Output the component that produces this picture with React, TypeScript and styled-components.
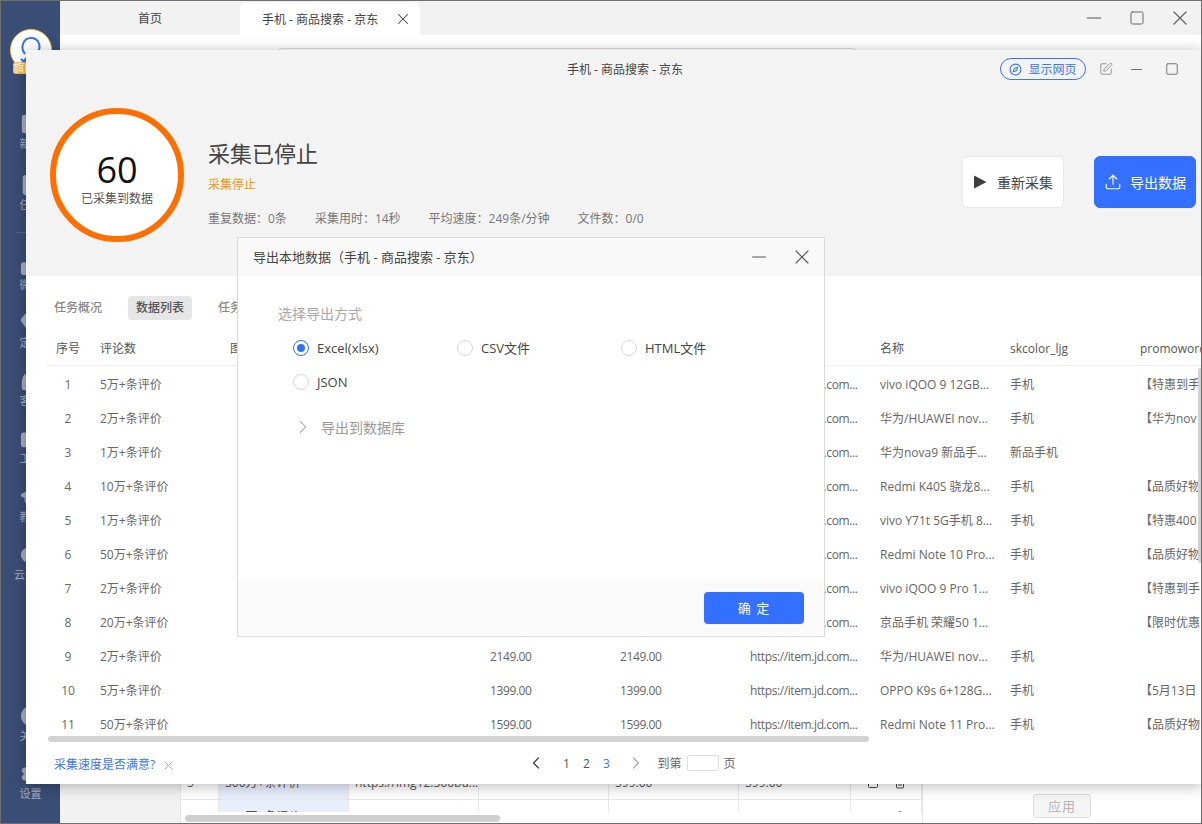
import React from "react";
import styled, { createGlobalStyle } from "styled-components";
import {
  Briefcase,
  ChevronLeft,
  ChevronRight,
  Cloud,
  Compass,
  FileText,
  Gem,
  GraduationCap,
  Headphones,
  Info,
  Minus,
  Settings,
  Square,
  SquarePen,
  SquarePlus,
  ThumbsUp,
  Trash2,
  SquareArrowOutUpRight,
  Upload,
  X,
} from "lucide-react";

const GlobalStyle = createGlobalStyle`
  html, body { margin: 0; padding: 0; background: #fff; }
  body { font-family: "Open Sans", "Noto Sans CJK SC", sans-serif; font-size: 12px; color: #555; overflow: hidden; }
  * { box-sizing: border-box; }
`;

const Frame = styled.div`
  position: relative;
  width: 1202px;
  height: 824px;
  display: flex;
  border: 1px solid #6e6e6e;
  overflow: hidden;
`;

const Sidebar = styled.nav`
  width: 59px;
  flex: none;
  background: #3a4d74;
  display: flex;
  flex-direction: column;
  align-items: center;
  padding-top: 28px;
`;

const LogoWrap = styled.div`
  position: relative;
  width: 42px;
  height: 46px;
  margin-bottom: 38px;
`;

const LogoCircle = styled.div`
  width: 42px;
  height: 42px;
  border-radius: 50%;
  background: #fff;
  border: 1px solid #f0c050;
  display: flex;
  align-items: center;
  justify-content: center;
`;

const LogoBadge = styled.span`
  position: absolute;
  left: 3px;
  top: 33px;
  width: 36px;
  height: 12px;
  border-radius: 3px;
  background: #f6bb3c;
  color: #fff;
  font-size: 11px;
  line-height: 12px;
  padding-left: 1px;
  white-space: nowrap;
  overflow: hidden;
`;

const NavList = styled.div<{ $gap: number }>`
  display: flex;
  flex-direction: column;
  align-items: center;
  gap: ${(p) => p.$gap}px;
`;

const NavItem = styled.div`
  display: flex;
  flex-direction: column;
  align-items: center;
  gap: 1px;
  color: #a4adc1;
  font-size: 11px;
  line-height: 15px;
  width: 59px;
  white-space: nowrap;
`;

const NavDivider = styled.div`
  width: 28px;
  height: 1px;
  background: #56678a;
  margin: 20px 0 21px;
`;

const NavBottom = styled(NavList)`
  margin-top: auto;
  padding-bottom: 22px;
`;

const Main = styled.div`
  flex: 1;
  min-width: 0;
  display: flex;
  flex-direction: column;
  background: #fff;
`;

const TabBar = styled.div`
  height: 34px;
  flex: none;
  background: #f2f2f2;
  display: flex;
  align-items: stretch;
`;

const Tab = styled.div<{ $active?: boolean }>`
  width: 180px;
  display: flex;
  align-items: center;
  justify-content: ${(p) => (p.$active ? "space-between" : "center")};
  padding: ${(p) => (p.$active ? "0 8px 0 22px" : "0")};
  margin-top: ${(p) => (p.$active ? "1px" : "0")};
  background: ${(p) => (p.$active ? "#fff" : "#f2f2f2")};
  border-radius: ${(p) => (p.$active ? "6px 6px 0 0" : "0 0 6px 0")};
  color: #444;
  font-size: 12px;
`;

const WindowControls = styled.div`
  margin-left: auto;
  display: grid;
  grid-template-columns: 43px 43px 43px;
  justify-items: center;
  align-items: center;
  color: #666;
`;

const SearchRow = styled.div`
  flex: none;
  height: 48px;
  padding: 13px 341px 0 215px;
`;

const SearchBox = styled.div`
  height: 35px;
  border: 1px solid #dcdcdc;
  border-radius: 8px;
`;

const Content = styled.div`
  flex: 1;
  min-height: 0;
  display: flex;
`;

const LeftPanel = styled.div`
  width: 121px;
  flex: none;
  background: #f2f2f2;
  border-right: 1px solid #e5e5e5;
`;

const BackTable = styled.div`
  width: 741px;
  flex: none;
  display: flex;
  flex-direction: column;
  min-height: 0;
`;

const BackRows = styled.div`
  flex: 1;
  min-height: 0;
  overflow: hidden;
  padding-top: 683px;
`;

const BackRow = styled.div`
  display: grid;
  grid-template-columns: 38px 130px 130px 130px 130px 112px 71px;
  height: 34px;
  border-bottom: 1px solid #e8e8e8;
`;

const BackCell = styled.div<{ $hl?: boolean }>`
  border-right: 1px solid #e8e8e8;
  background: ${(p) => (p.$hl ? "#e8eefc" : "#fff")};
  padding: 1px 6px 0;
  line-height: 31px;
  white-space: nowrap;
  overflow: hidden;
  color: #555;
`;

const BackActions = styled(BackCell)`
  display: flex;
  align-items: center;
  justify-content: center;
  gap: 15px;
  color: #444;
`;

const BackScrollTrack = styled.div`
  flex: none;
  height: 11px;
  padding: 3px 0 1px 4px;
  background: #fff;
`;

const BackScrollThumb = styled.div`
  width: 315px;
  height: 7px;
  border-radius: 4px;
  background: #cfcfcf;
`;

const RightPanel = styled.div`
  flex: 1;
  border-left: 1px solid #e5e5e5;
  display: flex;
  flex-direction: column;
  justify-content: flex-end;
  align-items: center;
  padding: 0 0 5px 0;
`;

const ApplyButton = styled.div`
  width: 58px;
  height: 24px;
  border: 1px solid #ddd;
  border-radius: 3px;
  background: #f5f5f5;
  color: #b5b5b5;
  font-size: 13px;
  line-height: 22px;
  text-align: center;
  letter-spacing: 1px;
`;

const TaskWindow = styled.section`
  position: absolute;
  left: 25px;
  top: 49px;
  right: -1px;
  height: 734px;
  background: #fff;
  box-shadow: 0 2px 14px rgba(0, 0, 0, 0.28);
  display: flex;
  flex-direction: column;
`;

const WindowHead = styled.header`
  height: 226px;
  flex: none;
  background: #f3f3f3;
  display: flex;
  flex-direction: column;
`;

const TitleRow = styled.div`
  height: 38px;
  flex: none;
  display: flex;
  align-items: center;
  padding: 0 12px 0 224px;
`;

const WindowTitle = styled.div`
  flex: 1;
  text-align: center;
  font-size: 12px;
  color: #444;
`;

const ShowPageButton = styled.div`
  width: 86px;
  height: 22px;
  border: 1px solid #3a76f6;
  border-radius: 11px;
  color: #3a76f6;
  display: flex;
  align-items: center;
  justify-content: center;
  gap: 6px;
  font-size: 12px;
  margin-right: 8px;
`;

const HeadIcons = styled.div`
  display: grid;
  grid-template-columns: 24px 36px 36px;
  justify-items: center;
  align-items: center;
  color: #8a8a8a;
`;

const Summary = styled.div`
  display: flex;
  align-items: flex-start;
  padding: 20px 6px 0 24px;
`;

const Ring = styled.div`
  width: 134px;
  height: 134px;
  flex: none;
  border-radius: 50%;
  border: 6px solid #ff6f00;
  background: #fff;
  display: flex;
  flex-direction: column;
  align-items: center;
  padding-top: 36px;
`;

const RingValue = styled.div`
  font-size: 36px;
  line-height: 40px;
  color: #111;
`;

const RingLabel = styled.div`
  font-size: 12px;
  line-height: 18px;
  color: #555;
`;

const SummaryText = styled.div`
  flex: 1;
  padding: 28px 0 0 24px;
`;

const StatusTitle = styled.h1`
  margin: 0;
  font-size: 22px;
  line-height: 34px;
  font-weight: 400;
  color: #444;
`;

const StatusNote = styled.div`
  color: #ff9500;
  font-size: 12px;
  line-height: 16px;
  margin-top: 7px;
`;

const Stats = styled.div`
  display: flex;
  gap: 28px;
  margin-top: 18px;
  color: #777;
  font-size: 12px;
  line-height: 16px;
`;

const ActionButton = styled.div<{ $primary?: boolean }>`
  width: 102px;
  height: 52px;
  margin: 48px 0 0 30px;
  border-radius: 6px;
  border: 1px solid ${(p) => (p.$primary ? "#3370ff" : "#e8e8e8")};
  background: ${(p) => (p.$primary ? "#3370ff" : "#fff")};
  color: ${(p) => (p.$primary ? "#fff" : "#444")};
  font-size: 14px;
  display: flex;
  align-items: center;
  justify-content: center;
  gap: ${(p) => (p.$primary ? "8px" : "10px")};
`;

const Tabs = styled.div`
  height: 55px;
  flex: none;
  display: flex;
  align-items: center;
  gap: 26px;
  padding: 9px 0 0 28px;
`;

const TabPill = styled.div<{ $active?: boolean }>`
  padding: 0 ${(p) => (p.$active ? "8px" : "0")};
  height: 24px;
  line-height: 24px;
  border-radius: 4px;
  background: ${(p) => (p.$active ? "#e6e6e6" : "transparent")};
  font-size: 12px;
  font-weight: 500;
  color: ${(p) => (p.$active ? "#555" : "#888")};
`;

const TableClip = styled.div`
  position: relative;
  height: 401px;
  flex: none;
  margin-left: 20px;
  overflow: hidden;
`;

const Row = styled.div<{ $head?: boolean }>`
  display: grid;
  grid-template-columns: 44px repeat(9, 130px);
  height: ${(p) => (p.$head ? "35px" : "34px")};
  padding-top: ${(p) => (p.$head ? "0" : "2px")};
  align-items: center;
  border-bottom: ${(p) => (p.$head ? "1px solid #eee" : "none")};
  color: ${(p) => (p.$head ? "#555" : "#666")};
`;

const Cell = styled.div<{ $center?: boolean; $tight?: boolean }>`
  padding: 0 10px;
  white-space: nowrap;
  overflow: hidden;
  text-align: ${(p) => (p.$center ? "center" : "left")};
  font-size: 12px;
  letter-spacing: ${(p) => (p.$tight ? "-0.4px" : "0")};
`;

const VScroll = styled.div`
  position: absolute;
  right: 0;
  top: 37px;
  width: 4px;
  height: 195px;
  border-radius: 2px;
  background: #d2d2d2;
`;

const HScroll = styled.div`
  flex: none;
  height: 6px;
  width: 821px;
  margin: 4px 0 0 22px;
  border-radius: 3px;
  background: #d2d2d2;
`;

const WindowFoot = styled.footer`
  position: relative;
  flex: 1;
  display: flex;
  align-items: center;
  justify-content: center;
`;

const Feedback = styled.div`
  position: absolute;
  left: 28px;
  top: 14px;
  display: flex;
  align-items: center;
  gap: 6px;
  color: #3a76f6;
  font-size: 12px;
  line-height: 18px;
`;

const Pager = styled.div`
  display: flex;
  align-items: center;
  margin-left: 34px;
  color: #666;
  font-size: 12px;
`;

const PageNum = styled.span<{ $active?: boolean }>`
  width: 20px;
  text-align: center;
  color: ${(p) => (p.$active ? "#3370ff" : "#555")};
`;

const PageInput = styled.div`
  width: 32px;
  height: 16px;
  border: 1px solid #ddd;
  border-radius: 2px;
  margin: 0 5px;
`;

const PagerArrow = styled.span<{ $muted?: boolean; $gap: string }>`
  display: flex;
  color: ${(p) => (p.$muted ? "#aaa" : "#444")};
  margin: ${(p) => p.$gap};
`;

const Dialog = styled.div`
  position: absolute;
  left: 211px;
  top: 187px;
  width: 588px;
  height: 400px;
  background: #fff;
  border: 1px solid #dadada;
  display: flex;
  flex-direction: column;
`;

const DialogHead = styled.div`
  height: 38px;
  flex: none;
  background: #f9f9f9;
  display: flex;
  align-items: center;
  justify-content: space-between;
  padding: 0 10px 1px 15px;
  font-size: 13px;
  color: #444;
`;

const DialogTools = styled.div`
  display: flex;
  align-items: center;
  gap: 20px;
  color: #555;
`;

const DialogBody = styled.div`
  flex: 1;
  padding: 28px 0 0 40px;
`;

const SectionLabel = styled.div`
  font-size: 14px;
  line-height: 20px;
  color: #a8a8a8;
`;

const RadioGrid = styled.div`
  display: grid;
  grid-template-columns: repeat(3, 164px);
  row-gap: 14px;
  margin: 14px 0 0 15px;
`;

const RadioItem = styled.label`
  display: flex;
  align-items: center;
  gap: 8px;
  height: 20px;
  font-size: 13px;
  line-height: 18px;
  color: #444;
`;

const RadioDot = styled.span<{ $on?: boolean }>`
  width: 16px;
  height: 16px;
  flex: none;
  border-radius: 50%;
  border: 1px solid ${(p) => (p.$on ? "#3370ff" : "#d8d8d8")};
  background: #fff;
  display: flex;
  align-items: center;
  justify-content: center;
  &::after {
    content: "";
    width: 8px;
    height: 8px;
    border-radius: 50%;
    background: ${(p) => (p.$on ? "#3370ff" : "transparent")};
  }
`;

const Collapse = styled.div`
  display: flex;
  align-items: center;
  gap: 7px;
  margin: 24px 0 0 14px;
  font-size: 14px;
  color: #999;
`;

const DialogFoot = styled.div`
  height: 56px;
  flex: none;
  background: #fafafa;
  display: flex;
  align-items: flex-start;
  justify-content: flex-end;
  padding: 12px 20px 0 0;
`;

const ConfirmButton = styled.div`
  width: 100px;
  height: 32px;
  border-radius: 4px;
  background: #3370ff;
  color: #fff;
  font-size: 13px;
  line-height: 32px;
  text-align: center;
  letter-spacing: 1px;
`;

const Logo = () => (
  <svg width="30" height="30" viewBox="0 0 30 30" fill="none" stroke="#3370ff" strokeWidth="2">
    <path d="M9 19 C4 13 7 3 15 3 C23 3 26 12 21 18 C18 21 13 20 12 21 L8 26 M5 24 L8 27 L13 24" />
  </svg>
);

const PlayIcon = () => (
  <svg width="14" height="14" viewBox="0 0 14 14">
    <path d="M1 0.5 L13.5 7 L1 13.5 Z" fill="#3d3d3d" />
  </svg>
);

const navTop = [
  { icon: SquarePlus, label: "新建" },
  { icon: FileText, label: "任务" },
];
const navMid = [
  { icon: ThumbsUp, label: "微信" },
  { icon: Gem, label: "定制" },
  { icon: Headphones, label: "客服" },
  { icon: Briefcase, label: "工具" },
  { icon: GraduationCap, label: "教程" },
  { icon: Cloud, label: "云采集" },
];
const navBottom = [
  { icon: Info, label: "关于" },
  { icon: Settings, label: "设置" },
];

const ITEM_URL = "https://item.jd.com...";
const rows = [
  ["1", "5万+条评价", "2999.00", "2999.00", "vivo iQOO 9 12GB...", "手机", "【特惠到手"],
  ["2", "2万+条评价", "2699.00", "2699.00", "华为/HUAWEI nov...", "手机", "【华为nov"],
  ["3", "1万+条评价", "2699.00", "2699.00", "华为nova9 新品手...", "新品手机", ""],
  ["4", "10万+条评价", "1999.00", "1999.00", "Redmi K40S 骁龙8...", "手机", "【品质好物"],
  ["5", "1万+条评价", "1099.00", "1099.00", "vivo Y71t 5G手机 8...", "手机", "【特惠400"],
  ["6", "50万+条评价", "1099.00", "1099.00", "Redmi Note 10 Pro...", "手机", "【品质好物"],
  ["7", "2万+条评价", "3999.00", "3999.00", "vivo iQOO 9 Pro 1...", "手机", "【特惠到手"],
  ["8", "20万+条评价", "1999.00", "1999.00", "京品手机 荣耀50 1...", "", "【限时优惠"],
  ["9", "2万+条评价", "2149.00", "2149.00", "华为/HUAWEI nov...", "手机", ""],
  ["10", "5万+条评价", "1399.00", "1399.00", "OPPO K9s 6+128G...", "手机", "【5月13日"],
  ["11", "50万+条评价", "1599.00", "1599.00", "Redmi Note 11 Pro...", "手机", "【品质好物"],
];

const radios = [
  { label: "Excel(xlsx)", on: true },
  { label: "CSV文件" },
  { label: "HTML文件" },
  { label: "JSON" },
];

const renderNav = (items: typeof navTop) =>
  items.map(({ icon: Icon, label }) => (
    <NavItem key={label}>
      <Icon size={22} fill="#a4adc1" />
      {label}
    </NavItem>
  ));

export default function App() {
  return (
    <>
      <GlobalStyle />
      <Frame>
        <Sidebar>
          <LogoWrap>
            <LogoCircle>
              <Logo />
            </LogoCircle>
            <LogoBadge>旗舰版</LogoBadge>
          </LogoWrap>
          <NavList $gap={23}>{renderNav(navTop)}</NavList>
          <NavDivider />
          <NavList $gap={20}>{renderNav(navMid)}</NavList>
          <NavBottom $gap={20}>{renderNav(navBottom)}</NavBottom>
        </Sidebar>
        <Main>
          <TabBar>
            <Tab>首页</Tab>
            <Tab $active>
              手机 - 商品搜索 - 京东
              <X size={18} strokeWidth={1.4} />
            </Tab>
            <WindowControls>
              <Minus size={22} strokeWidth={1.8} color="#888" />
              <Square size={16} strokeWidth={1.5} />
              <X size={24} strokeWidth={1.3} />
            </WindowControls>
          </TabBar>
          <SearchRow>
            <SearchBox />
          </SearchRow>
          <Content>
            <LeftPanel />
            <BackTable>
              <BackRows>
                {["5", ""].map((n, i) => (
                  <BackRow key={i}>
                    <BackCell>{n}</BackCell>
                    <BackCell $hl>{i === 0 ? "300万+条评价" : "200万+条评价"}</BackCell>
                    <BackCell>{i === 0 ? "https://img12.360bu..." : ""}</BackCell>
                    <BackCell />
                    <BackCell>{i === 0 ? "599.00" : ""}</BackCell>
                    <BackCell>{i === 0 ? "599.00" : ""}</BackCell>
                    <BackActions>
                      <SquareArrowOutUpRight size={12} />
                      <Trash2 size={12} />
                    </BackActions>
                  </BackRow>
                ))}
              </BackRows>
              <BackScrollTrack>
                <BackScrollThumb />
              </BackScrollTrack>
            </BackTable>
            <RightPanel>
              <ApplyButton>应用</ApplyButton>
            </RightPanel>
          </Content>
        </Main>

        <TaskWindow>
          <WindowHead>
            <TitleRow>
              <WindowTitle>手机 - 商品搜索 - 京东</WindowTitle>
              <ShowPageButton>
                <Compass size={13} />
                显示网页
              </ShowPageButton>
              <HeadIcons>
                <SquarePen size={14} strokeWidth={1.5} />
                <Minus size={17} strokeWidth={1.3} color="#666" />
                <Square size={14} strokeWidth={1.5} color="#666" />
              </HeadIcons>
            </TitleRow>
            <Summary>
              <Ring>
                <RingValue>60</RingValue>
                <RingLabel>已采集到数据</RingLabel>
              </Ring>
              <SummaryText>
                <StatusTitle>采集已停止</StatusTitle>
                <StatusNote>采集停止</StatusNote>
                <Stats>
                  <span>重复数据：0条</span>
                  <span>采集用时：14秒</span>
                  <span>平均速度：249条/分钟</span>
                  <span>文件数：0/0</span>
                </Stats>
              </SummaryText>
              <ActionButton>
                <PlayIcon />
                重新采集
              </ActionButton>
              <ActionButton $primary>
                <Upload size={18} strokeWidth={1.5} />
                导出数据
              </ActionButton>
            </Summary>
          </WindowHead>

          <Tabs>
            <TabPill>任务概况</TabPill>
            <TabPill $active>数据列表</TabPill>
            <TabPill>任务日志</TabPill>
          </Tabs>

          <TableClip>
            <Row $head>
              <Cell $center>序号</Cell>
              <Cell>评论数</Cell>
              <Cell>图片</Cell>
              <Cell>标题</Cell>
              <Cell>价格</Cell>
              <Cell>原价</Cell>
              <Cell>链接</Cell>
              <Cell>名称</Cell>
              <Cell>skcolor_ljg</Cell>
              <Cell>promowords</Cell>
            </Row>
            {rows.map((r) => (
              <Row key={r[0]}>
                <Cell $center>{r[0]}</Cell>
                <Cell>{r[1]}</Cell>
                <Cell />
                <Cell />
                <Cell $tight>{r[2]}</Cell>
                <Cell $tight>{r[3]}</Cell>
                <Cell $tight>{ITEM_URL}</Cell>
                <Cell>{r[4]}</Cell>
                <Cell>{r[5]}</Cell>
                <Cell>{r[6]}</Cell>
              </Row>
            ))}
            <VScroll />
          </TableClip>
          <HScroll />

          <WindowFoot>
            <Feedback>
              采集速度是否满意?
              <X size={15} strokeWidth={1.5} color="#aaa" />
            </Feedback>
            <Pager>
              <PagerArrow $gap="0 10px 0 0">
                <ChevronLeft size={20} strokeWidth={1.5} />
              </PagerArrow>
              <PageNum>1</PageNum>
              <PageNum>2</PageNum>
              <PageNum $active>3</PageNum>
              <PagerArrow $muted $gap="0 11px 0 10px">
                <ChevronRight size={20} strokeWidth={1.5} />
              </PagerArrow>
              到第
              <PageInput />页
            </Pager>
          </WindowFoot>

          <Dialog>
            <DialogHead>
              导出本地数据（手机 - 商品搜索 - 京东）
              <DialogTools>
                <Minus size={22} strokeWidth={1.1} />
                <X size={24} strokeWidth={1.1} />
              </DialogTools>
            </DialogHead>
            <DialogBody>
              <SectionLabel>选择导出方式</SectionLabel>
              <RadioGrid>
                {radios.map((r) => (
                  <RadioItem key={r.label}>
                    <RadioDot $on={r.on} />
                    {r.label}
                  </RadioItem>
                ))}
              </RadioGrid>
              <Collapse>
                <ChevronRight size={22} strokeWidth={1.1} />
                导出到数据库
              </Collapse>
            </DialogBody>
            <DialogFoot>
              <ConfirmButton>确 定</ConfirmButton>
            </DialogFoot>
          </Dialog>
        </TaskWindow>
      </Frame>
    </>
  );
}
